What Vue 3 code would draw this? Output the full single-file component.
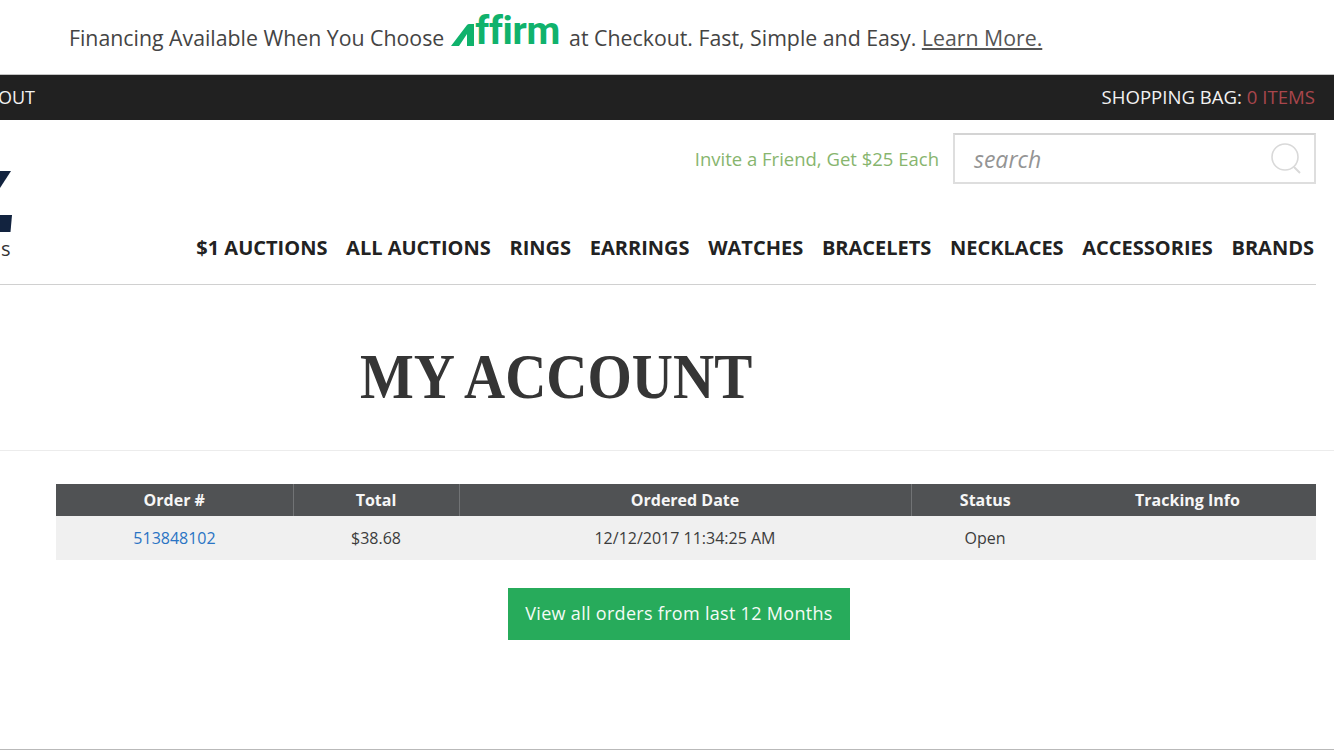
<script setup>
const navItems = ['$1 Auctions', 'All Auctions', 'Rings', 'Earrings', 'Watches', 'Bracelets', 'Necklaces', 'Accessories', 'Brands']
const columns = [
  { label: 'Order #', width: 237 },
  { label: 'Total', width: 166 },
  { label: 'Ordered Date', width: 452 },
  { label: 'Status', width: 148 },
  { label: 'Tracking Info', width: 257 }
]
</script>

<template>
  <div class="page">
    <div class="promo">
      <span>Financing Available When You Choose</span>
      <span class="affirm">
        <svg class="affirm-mark" width="24" height="30" viewBox="0 0 24 30">
          <path d="M1 30 L17 9 Q18 8 19 8 L24 8 L24 30 L17 30 L17 18 L9 30 Z" fill="#10b26c" />
        </svg>
        <span class="affirm-word">ffirm</span>
      </span>
      <span>at Checkout. Fast, Simple and Easy. <a class="learn">Learn More.</a></span>
    </div>

    <div class="topbar">
      <span class="logout">OUT</span>
      <span>SHOPPING BAG: <span class="items">0 ITEMS</span></span>
    </div>

    <header class="header">
      <div class="logo">
        <svg width="14" height="62" viewBox="0 0 14 62">
          <path d="M0 0 L11 0 L0 17 Z" fill="#12233f" />
          <path d="M0 44 L12 44 L10.5 61 L0 61 Z" fill="#12233f" />
        </svg>
        <span class="logo-s">s</span>
      </div>
      <div class="header-main">
        <div class="util">
          <a class="invite">Invite a Friend, Get $25 Each</a>
          <div class="search">
            <span class="search-text">search</span>
            <svg width="32" height="32" viewBox="0 0 32 32" fill="none" stroke="#d9d9d9">
              <circle cx="15" cy="14" r="13" stroke-width="1.6" />
              <path d="M24 24 L30 30" stroke-width="2" />
            </svg>
          </div>
        </div>
        <nav class="nav">
          <a v-for="item in navItems" :key="item" class="nav-item">{{ item }}</a>
        </nav>
      </div>
    </header>

    <main>
      <h1 class="title"><span class="title-text">MY ACCOUNT</span></h1>
      <div class="orders">
        <table class="table">
          <colgroup>
            <col v-for="c in columns" :key="c.label" :style="{ width: c.width + 'px' }" />
          </colgroup>
          <thead>
            <tr>
              <th v-for="c in columns" :key="c.label">{{ c.label }}</th>
            </tr>
          </thead>
          <tbody>
            <tr>
              <td><a class="order-link">513848102</a></td>
              <td>$38.68</td>
              <td>12/12/2017 11:34:25 AM</td>
              <td>Open</td>
              <td></td>
            </tr>
          </tbody>
        </table>
        <div class="actions">
          <button class="view-all">View all orders from last 12 Months</button>
        </div>
      </div>
    </main>
  </div>
</template>

<style>
html, body { margin: 0; overflow: hidden; }
</style>

<style scoped>
.page {
  width: 1334px;
  height: 750px;
  overflow: hidden;
  box-sizing: border-box;
  border-bottom: 1px solid #b9b9b9;
  background: #fff;
  font-family: "Open Sans", "Liberation Sans", sans-serif;
  color: #333;
}
.promo {
  height: 74px;
  box-sizing: border-box;
  padding: 1px 0 0 69px;
  display: flex;
  align-items: center;
  font-size: 21.3px;
  color: #444;
  white-space: nowrap;
}
.affirm {
  display: inline-flex;
  align-items: flex-end;
  margin: -13px 9px 0 6px;
  height: 30px;
  color: #10b26c;
}
.affirm-mark { flex: none; margin-right: 1px; }
.affirm-word {
  font-weight: 700;
  font-size: 39px;
  line-height: 30px;
  letter-spacing: -0.3px;
  font-family: Roboto, sans-serif;
}
.learn { text-decoration: underline; color: #555; }
.topbar {
  height: 43px;
  background: #212121;
  border-top: 1px solid #c4c4c4;
  display: flex;
  justify-content: space-between;
  align-items: center;
  padding: 0 19px 2px 0;
  color: #f2f2f2;
  font-size: 18.6px;
}
.logout { margin-left: -2px; font-size: 18px; }
.items { color: #a8464c; }
.header {
  width: 1316px;
  height: 165px;
  display: flex;
  box-sizing: border-box;
  border-bottom: 1px solid #d0d0d0;
}
.logo {
  width: 14px;
  flex: none;
  padding-top: 51px;
  display: flex;
  flex-direction: column;
  color: #333;
}
.logo svg { display: block; }
.logo-s { font-size: 20px; line-height: 24px; margin-top: 4px; padding-left: 1px; }
.header-main {
  flex: 1;
  display: flex;
  flex-direction: column;
  align-items: flex-end;
  padding-top: 13px;
}
.util { display: flex; align-items: center; gap: 14px; }
.invite { color: #87b56e; font-size: 18.5px; }
.search {
  width: 363px;
  height: 51px;
  box-sizing: border-box;
  border: 2px solid #dedede;
  border-top-color: #d4d4d4;
  display: flex;
  align-items: center;
  justify-content: space-between;
  padding: 0 12px 0 19px;
}
.search-text { font-style: italic; font-size: 23px; color: #949494; }
.nav { display: flex; gap: 18.7px; margin-top: 50px; padding-right: 2px; }
.nav-item {
  text-transform: uppercase;
  font-weight: 700;
  font-size: 20px;
  line-height: 27px;
  color: #222;
  white-space: nowrap;
}
.title {
  margin: 0;
  height: 166px;
  box-sizing: border-box;
  border-bottom: 1px solid #ececec;
  padding-left: 360px;
  padding-top: 56px;
  font-family: "Liberation Serif", serif;
  font-weight: 700;
  font-size: 63px;
  line-height: 72px;
  color: #353535;
  white-space: nowrap;
}
.title-text {
  display: inline-block;
  transform: scaleX(0.905);
  transform-origin: left center;
}
.orders { padding: 33px 18px 0 56px; }
.table {
  width: 1260px;
  table-layout: fixed;
  border-collapse: collapse;
}
th {
  height: 32px;
  padding: 0;
  background: #505254;
  color: #f6f6f6;
  font-size: 16px;
  font-weight: 700;
  border-left: 1px solid #717375;
}
th:first-child, th:last-child { border-left: 0; }
td {
  height: 44px;
  padding: 0;
  background: #f0f0f0;
  text-align: center;
  font-size: 16px;
  color: #3c3c3c;
}
.order-link { color: #2a74c4; }
.actions { display: flex; padding: 28px 0 0 452px; }
.view-all {
  width: 342px;
  height: 52px;
  border: 0;
  padding: 0 0 2px;
  background: #27ab5b;
  color: #f4fbf6;
  font-family: inherit;
  font-size: 18px;
  letter-spacing: 0.3px;
}
</style>
